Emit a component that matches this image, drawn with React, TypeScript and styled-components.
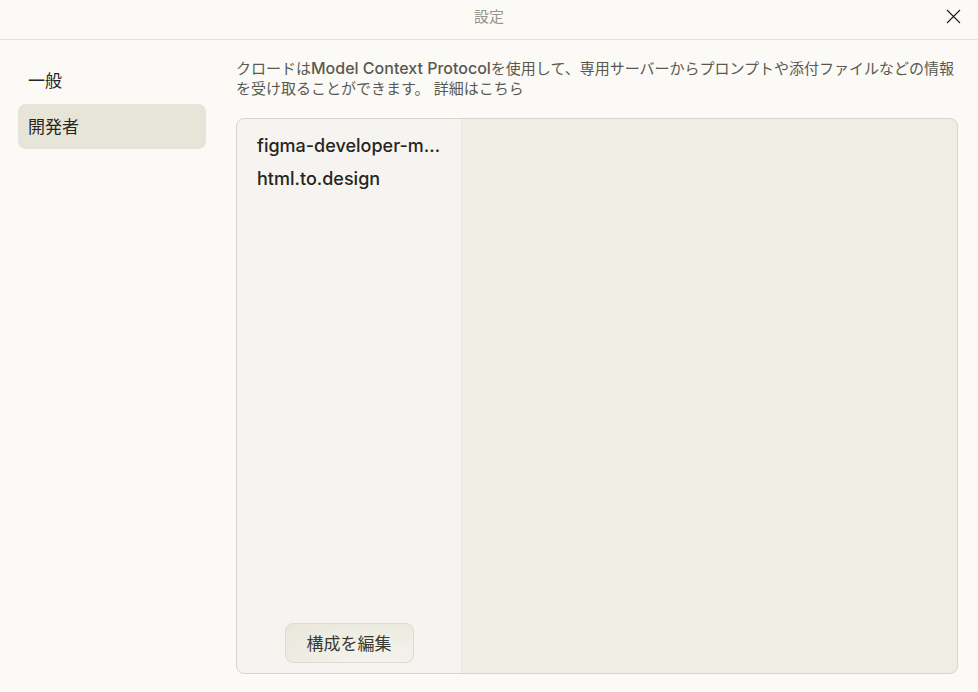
import React, { useState } from 'react';
import styled, { createGlobalStyle } from 'styled-components';

const GlobalStyle = createGlobalStyle`
  *, *::before, *::after { box-sizing: border-box; }
  body {
    margin: 0;
    background: #fbfaf6;
    color: #262521;
    font-family: Inter, "Noto Sans CJK JP", sans-serif;
  }
  button { font-family: inherit; color: inherit; cursor: pointer; }
`;

const Window = styled.div`
  display: flex;
  flex-direction: column;
  min-height: 100vh;
`;

const TitleBar = styled.header`
  display: grid;
  grid-template-columns: 1fr auto 1fr;
  align-items: center;
  height: 40px;
  padding: 0 17px 6px;
  border-bottom: 1px solid #e4e3de;
`;

const Title = styled.h1`
  grid-column: 2;
  margin: 0;
  font-size: 15px;
  font-weight: 400;
  line-height: 20px;
  color: #96948c;
`;

const CloseButton = styled.button`
  justify-self: end;
  display: flex;
  padding: 0;
  border: 0;
  background: none;
`;

const Body = styled.div`
  flex: 1;
  display: flex;
  gap: 30px;
  padding: 18px 20px 18px 18px;
`;

const Nav = styled.nav`
  flex: 0 0 188px;
  display: flex;
  flex-direction: column;
  gap: 1px;
`;

const NavItem = styled.button<{ $active: boolean }>`
  height: 45px;
  padding: 0 10px 2px;
  border: 0;
  border-radius: 8px;
  background: ${({ $active }) => ($active ? '#e7e5d8' : 'transparent')};
  font-size: 17px;
  text-align: left;
`;

const Content = styled.main`
  flex: 1;
  min-width: 0;
  display: flex;
  flex-direction: column;
  gap: 19px;
`;

const Description = styled.p`
  margin: 0;
  padding-top: 1px;
  font-size: 15px;
  line-height: 20px;
  color: #5a5951;
`;

const Emphasis = styled.span`
  font-size: 16px;
  font-weight: 500;
  line-height: 1;
`;

const DetailLink = styled.a`
  color: inherit;
  text-decoration: none;
`;

const Panel = styled.section`
  flex: 1;
  display: flex;
  border: 1px solid #d6d5cd;
  border-radius: 8px;
  overflow: hidden;
  background: #eeeee5;
`;

const ServerColumn = styled.div`
  flex: 0 0 225px;
  min-width: 0;
  display: flex;
  flex-direction: column;
  justify-content: space-between;
  align-items: center;
  padding: 10px 12px;
  border-right: 1px solid #e9e9e3;
  background: #f5f4f0;
`;

const ServerList = styled.ul`
  align-self: stretch;
  margin: 0;
  padding: 0;
  list-style: none;
`;

const ServerButton = styled.button`
  display: block;
  width: 100%;
  height: 33px;
  padding: 0 8px;
  border: 0;
  background: none;
  font-size: 18px;
  font-weight: 500;
  text-align: left;
  white-space: nowrap;
  overflow: hidden;
  text-overflow: ellipsis;
`;

const EditButton = styled.button`
  height: 40px;
  padding: 0 21px 2px;
  border: 1px solid #dedcd0;
  border-radius: 8px;
  background: radial-gradient(ellipse at 70% 90%, #f2f1eb 20%, #e9e7da 100%);
  color: #3a3932;
  font-size: 17px;
`;

const sections = ['一般', '開発者'];
const servers = ['figma-developer-mcp', 'html.to.design'];

export default function App() {
  const [section, setSection] = useState('開発者');
  return (
    <Window>
      <GlobalStyle />
      <TitleBar>
        <Title>設定</Title>
        <CloseButton aria-label="閉じる">
          <svg width="15" height="15" viewBox="0 0 15 15" stroke="#1c1b18" strokeWidth="1.1">
            <path d="M1 1 14 14M14 1 1 14" />
          </svg>
        </CloseButton>
      </TitleBar>
      <Body>
        <Nav>
          {sections.map((name) => (
            <NavItem key={name} $active={name === section} onClick={() => setSection(name)}>
              {name}
            </NavItem>
          ))}
        </Nav>
        <Content>
          <Description>
            クロードは<Emphasis>Model Context Protocol</Emphasis>を使用して、専用サーバーからプロンプトや添付ファイルなどの情報を受け取ることができます。 <DetailLink href="#details">詳細はこちら</DetailLink>
          </Description>
          <Panel>
            <ServerColumn>
              <ServerList>
                {servers.map((name) => (
                  <li key={name}>
                    <ServerButton>{name}</ServerButton>
                  </li>
                ))}
              </ServerList>
              <EditButton>構成を編集</EditButton>
            </ServerColumn>
          </Panel>
        </Content>
      </Body>
    </Window>
  );
}
